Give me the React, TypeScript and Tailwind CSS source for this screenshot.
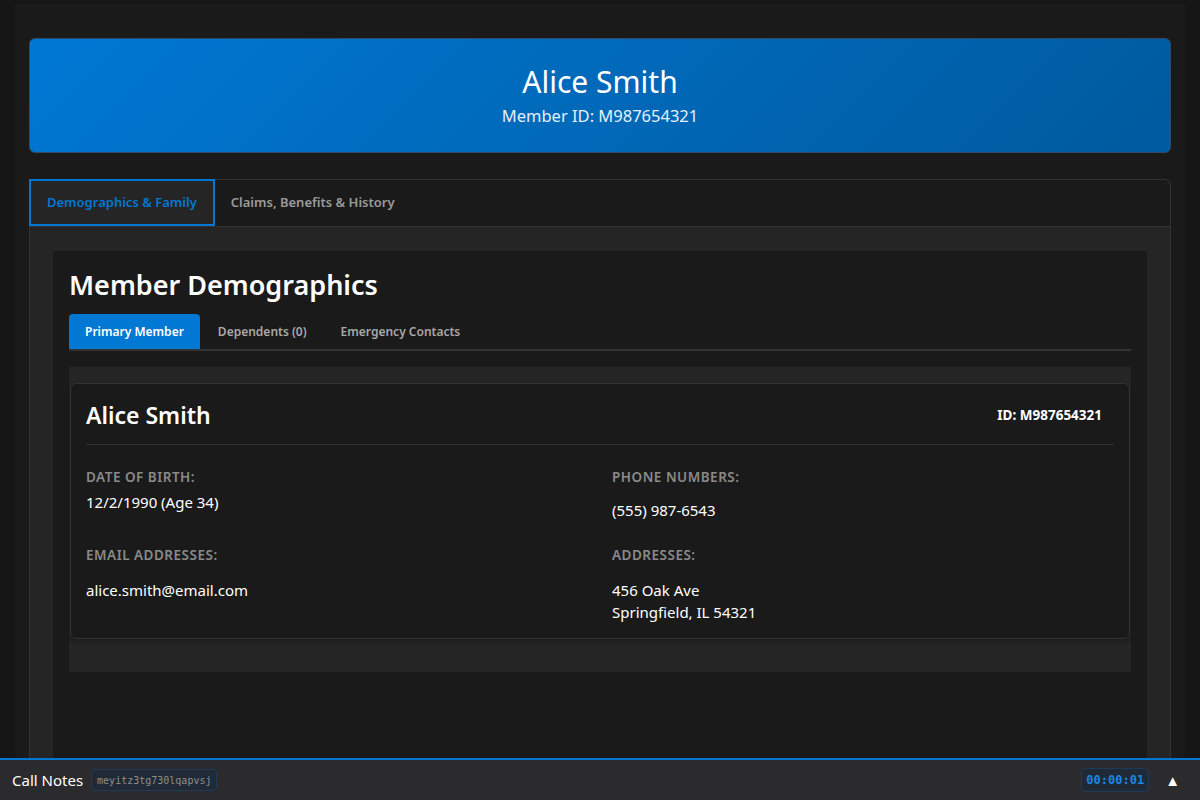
import { useState } from "react";

const FONT = "font-['Noto_Sans','Open_Sans',sans-serif]";
const MONO = "font-['DejaVu_Sans_Mono','Liberation_Mono',monospace]";

const mainTabs = ["Demographics & Family", "Claims, Benefits & History"];
const subTabs = ["Primary Member", "Dependents (0)", "Emergency Contacts"];

function Field({
  label,
  children,
  listGap,
}: {
  label: string;
  children: React.ReactNode;
  listGap?: string;
}) {
  return (
    <div>
      <div className="text-[13.5px] leading-5 font-semibold uppercase tracking-[0.5px] text-[#8a8a8a]">
        {label}
      </div>
      <div className={`${listGap ?? "mt-1"} text-[15px] leading-[22px] text-white`}>
        {children}
      </div>
    </div>
  );
}

export default function App() {
  const [tab, setTab] = useState(0);
  const [sub, setSub] = useState(0);

  return (
    <div className={`${FONT} min-h-screen bg-[#161616] px-[15px] pt-[4px]`}>
      <div className="bg-[#1a1a1a] px-[14px] pt-[34px]">
        {/* Member header */}
        <div className="mb-[26px] rounded-md border border-[#2f4a66] bg-[linear-gradient(135deg,#0078d4,#005a9e)] pt-[23px] pb-[24px] text-center text-white">
          <h1 className="text-[30px] leading-10 font-normal">Alice Smith</h1>
          <p className="mt-[2px] text-[16.5px] leading-6 text-[#e6f0fa]">
            Member ID: M987654321
          </p>
        </div>

        {/* Main tabs */}
        <div className="rounded-md border border-[#333333] bg-[#1a1a1a]">
          <div className="flex h-[47px] border-b border-[#333333]">
            {mainTabs.map((t, i) => (
              <button
                key={t}
                onClick={() => setTab(i)}
                className={
                  i === tab
                    ? "-mt-px -ml-px h-[47px] border-2 border-[#0078d4] bg-[#252525] px-[16px] text-[13px] font-semibold text-[#0078d4]"
                    : "h-[46px] px-4 text-[13px] font-semibold text-[#9a9a9a]"
                }
              >
                {t}
              </button>
            ))}
          </div>

          <div className="bg-[#252525] px-[23px] pt-6">
            <div className="min-h-[600px] bg-[#1a1a1a] p-4">
              <h2 className="text-[27px] leading-9 font-semibold text-white">
                Member Demographics
              </h2>

              <div className="mt-[11px] flex border-b-2 border-[#333333]">
                {subTabs.map((t, i) => (
                  <button
                    key={t}
                    onClick={() => setSub(i)}
                    className={
                      i === sub
                        ? "mr-0.5 h-[35px] rounded-t bg-[#0078d4] px-4 text-[12px] font-semibold text-white"
                        : "mr-0.5 h-[35px] rounded-t px-4 text-[12px] font-semibold text-[#a8a8a8]"
                    }
                  >
                    {t}
                  </button>
                ))}
              </div>

              <div className="mt-4 bg-[#252525] px-px pt-4 pb-[33px]">
                <div className="rounded-md border border-[#333333] bg-[#1a1a1a] p-[15px] shadow-[0_2px_4px_rgba(0,0,0,0.3)]">
                  <div className="flex items-center justify-between border-b border-[#333333] pt-px pb-[14px]">
                    <h3 className="text-[23px] leading-[30px] font-semibold text-white">
                      Alice Smith
                    </h3>
                    <span className="px-3 text-[13.5px] font-bold text-white">
                      ID: M987654321
                    </span>
                  </div>

                  <div className="mt-[22px] grid grid-cols-2 gap-x-6 gap-y-6">
                    <Field label="Date of Birth:">12/2/1990 (Age 34)</Field>
                    <Field label="Phone Numbers:" listGap="mt-3">
                      (555) 987-6543
                    </Field>
                    <Field label="Email Addresses:" listGap="mt-[14px]">
                      alice.smith@email.com
                    </Field>
                    <Field label="Addresses:" listGap="mt-[14px]">
                      <div>456 Oak Ave</div>
                      <div>Springfield, IL 54321</div>
                    </Field>
                  </div>
                </div>
              </div>
            </div>
          </div>
        </div>
      </div>

      {/* Call notes bar */}
      <div className="fixed inset-x-0 bottom-0 flex h-[42px] items-center border-t-2 border-[#0078d4] bg-[#2b2b2d] pr-5 pl-3">
        <span className="text-[15px] text-white">Call Notes</span>
        <span
          className={`${MONO} ml-2 flex h-[22px] items-center rounded-sm border border-[#1f3b57] bg-[#1f2a36] px-[5px] text-[10px] text-[#8f8f8f]`}
        >
          meyitz3tg730lqapvsj
        </span>
        <div className="ml-auto flex items-center gap-[16px]">
          <span
            className={`${MONO} flex h-6 items-center rounded-sm border border-[#1f3b57] bg-[#1f2a36] px-1 text-[12px] font-bold text-[#1c86e0]`}
          >
            00:00:01
          </span>
          <span className="text-[15px] leading-none text-white">▲</span>
        </div>
      </div>
    </div>
  );
}
